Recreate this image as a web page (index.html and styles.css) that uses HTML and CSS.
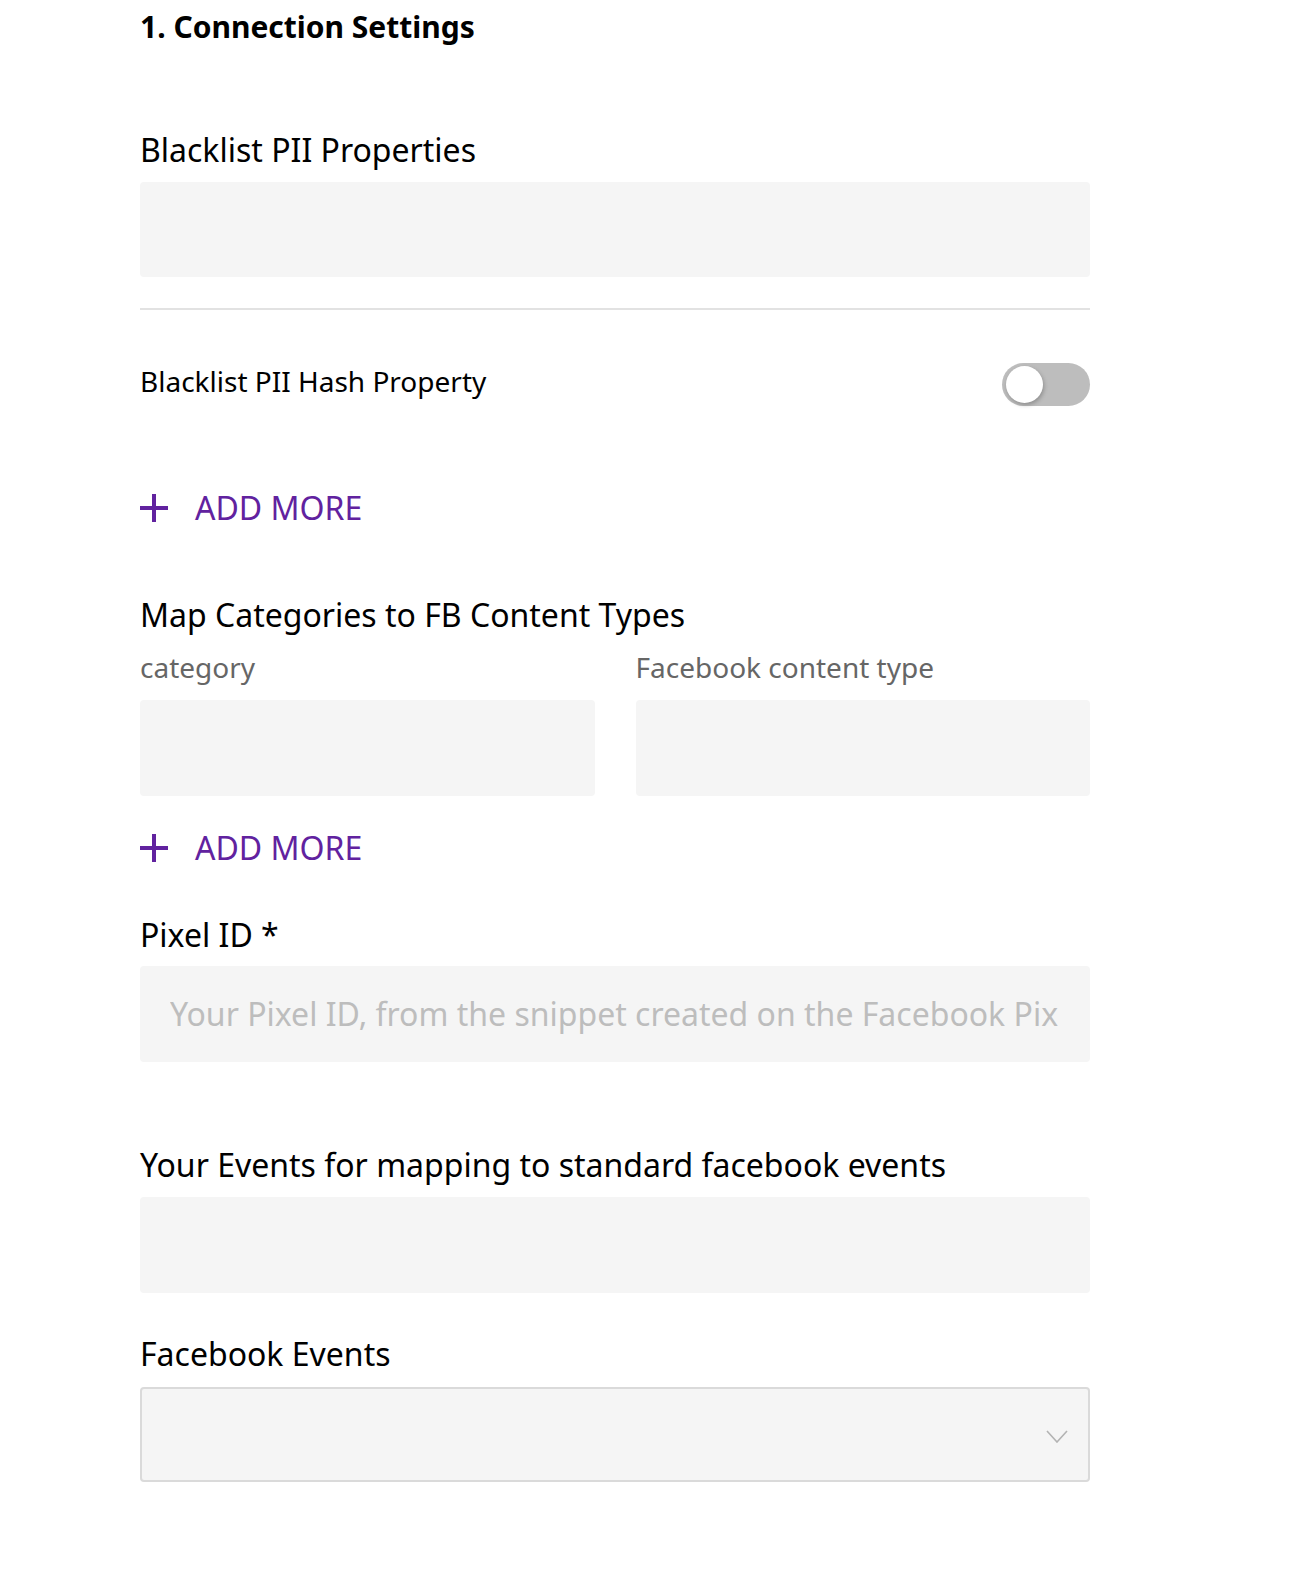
FILE: index.html
```html
<!DOCTYPE html>
<html lang="en">
<head>
<meta charset="utf-8">
<title>Connection Settings</title>
<link rel="stylesheet" href="styles.css">
</head>
<body>
<div class="page">
  <h1 class="title">1. Connection Settings</h1>

  <div class="label label-first">Blacklist PII Properties</div>
  <div class="field"></div>

  <div class="divider"></div>

  <div class="toggle-row">
    <span class="toggle-text">Blacklist PII Hash Property</span>
    <span class="toggle"><span class="knob"></span></span>
  </div>

  <div class="add-more add-more-first">
    <svg class="plus" width="28" height="28" viewBox="0 0 28 28"><rect x="0" y="12" width="28" height="4" fill="currentColor"/><rect x="12" y="0" width="4" height="28" fill="currentColor"/></svg>
    <span>ADD MORE</span>
  </div>

  <div class="label label-map">Map Categories to FB Content Types</div>
  <div class="cols">
    <div class="col">
      <div class="sublabel">category</div>
      <div class="field"></div>
    </div>
    <div class="col">
      <div class="sublabel">Facebook content type</div>
      <div class="field"></div>
    </div>
  </div>

  <div class="add-more add-more-second">
    <svg class="plus" width="28" height="28" viewBox="0 0 28 28"><rect x="0" y="12" width="28" height="4" fill="currentColor"/><rect x="12" y="0" width="4" height="28" fill="currentColor"/></svg>
    <span>ADD MORE</span>
  </div>

  <div class="label label-pixel">Pixel ID *</div>
  <div class="field field-pixel"><div class="placeholder">Your Pixel ID, from the snippet created on the Facebook Pix</div></div>

  <div class="label label-events">Your Events for mapping to standard facebook events</div>
  <div class="field"></div>

  <div class="label label-fb">Facebook Events</div>
  <div class="select">
    <svg class="chevron" width="22" height="13" viewBox="0 0 22 13"><path d="M1 1 L11 12 L21 1" fill="none" stroke="#b3b3b3" stroke-width="1.6"/></svg>
  </div>
</div>
</body>
</html>
```

FILE: styles.css
```css
html, body {
  margin: 0;
  padding: 0;
  background: #ffffff;
}

body {
  font-family: "Noto Sans", "Open Sans", sans-serif;
  color: #000000;
}

.page {
  width: 950px;
  margin-left: 140px;
  padding-top: 7px;
  padding-bottom: 90px;
}

.title {
  margin: 0;
  font-size: 30px;
  line-height: 40px;
  font-weight: 700;
}

.label {
  font-size: 32px;
  line-height: 44px;
  height: 44px;
  white-space: nowrap;
}

.label-first { margin-top: 81px; }
.label-map { margin-top: 63px; }
.label-pixel { margin-top: 43px; }
.label-events { margin-top: 81px; }
.label-fb { margin-top: 39px; }

.field {
  height: 96px;
  background: #f5f5f5;
  border-radius: 4px;
  margin-top: 10px;
}

.label-first + .field { height: 95px; }

.divider {
  height: 2px;
  background: #e2e2e2;
  margin-top: 31px;
}

.toggle-row {
  margin-top: 52px;
  height: 44px;
  display: flex;
  align-items: center;
  justify-content: space-between;
}

.toggle-text {
  font-size: 28px;
  line-height: 38px;
  padding-bottom: 6px;
}

.toggle {
  width: 88px;
  height: 43px;
  border-radius: 22px;
  background: #bdbdbd;
  display: flex;
  align-items: center;
  padding-left: 4px;
  box-sizing: border-box;
}

.knob {
  width: 37px;
  height: 37px;
  border-radius: 50%;
  background: #ffffff;
  box-shadow: 1px 2px 4px rgba(0, 0, 0, 0.25);
}

.add-more {
  height: 44px;
  display: flex;
  align-items: center;
  gap: 27px;
  color: #61229f;
  font-size: 32px;
  line-height: 44px;
}

.add-more-first { margin-top: 80px; }
.add-more-second { margin-top: 30px; }

.plus {
  flex: none;
  display: block;
}

.cols {
  display: grid;
  grid-template-columns: 1fr 1fr;
  column-gap: 41px;
  margin-top: 11px;
}

.sublabel {
  font-size: 28px;
  line-height: 38px;
  color: #666666;
}

.cols .field {
  margin-top: 14px;
}

.field-pixel {
  margin-top: 9px;
  padding: 0 30px;
  box-sizing: border-box;
}

.placeholder {
  font-size: 32px;
  line-height: 96px;
  color: #bdbdbd;
  white-space: nowrap;
  overflow: hidden;
}

.select {
  margin-top: 11px;
  height: 95px;
  box-sizing: border-box;
  background: #f5f5f5;
  border: 2px solid #dadada;
  border-radius: 4px;
  display: flex;
  align-items: center;
  justify-content: flex-end;
  padding-right: 20px;
}

.chevron {
  display: block;
  margin-top: 4px;
}
```
